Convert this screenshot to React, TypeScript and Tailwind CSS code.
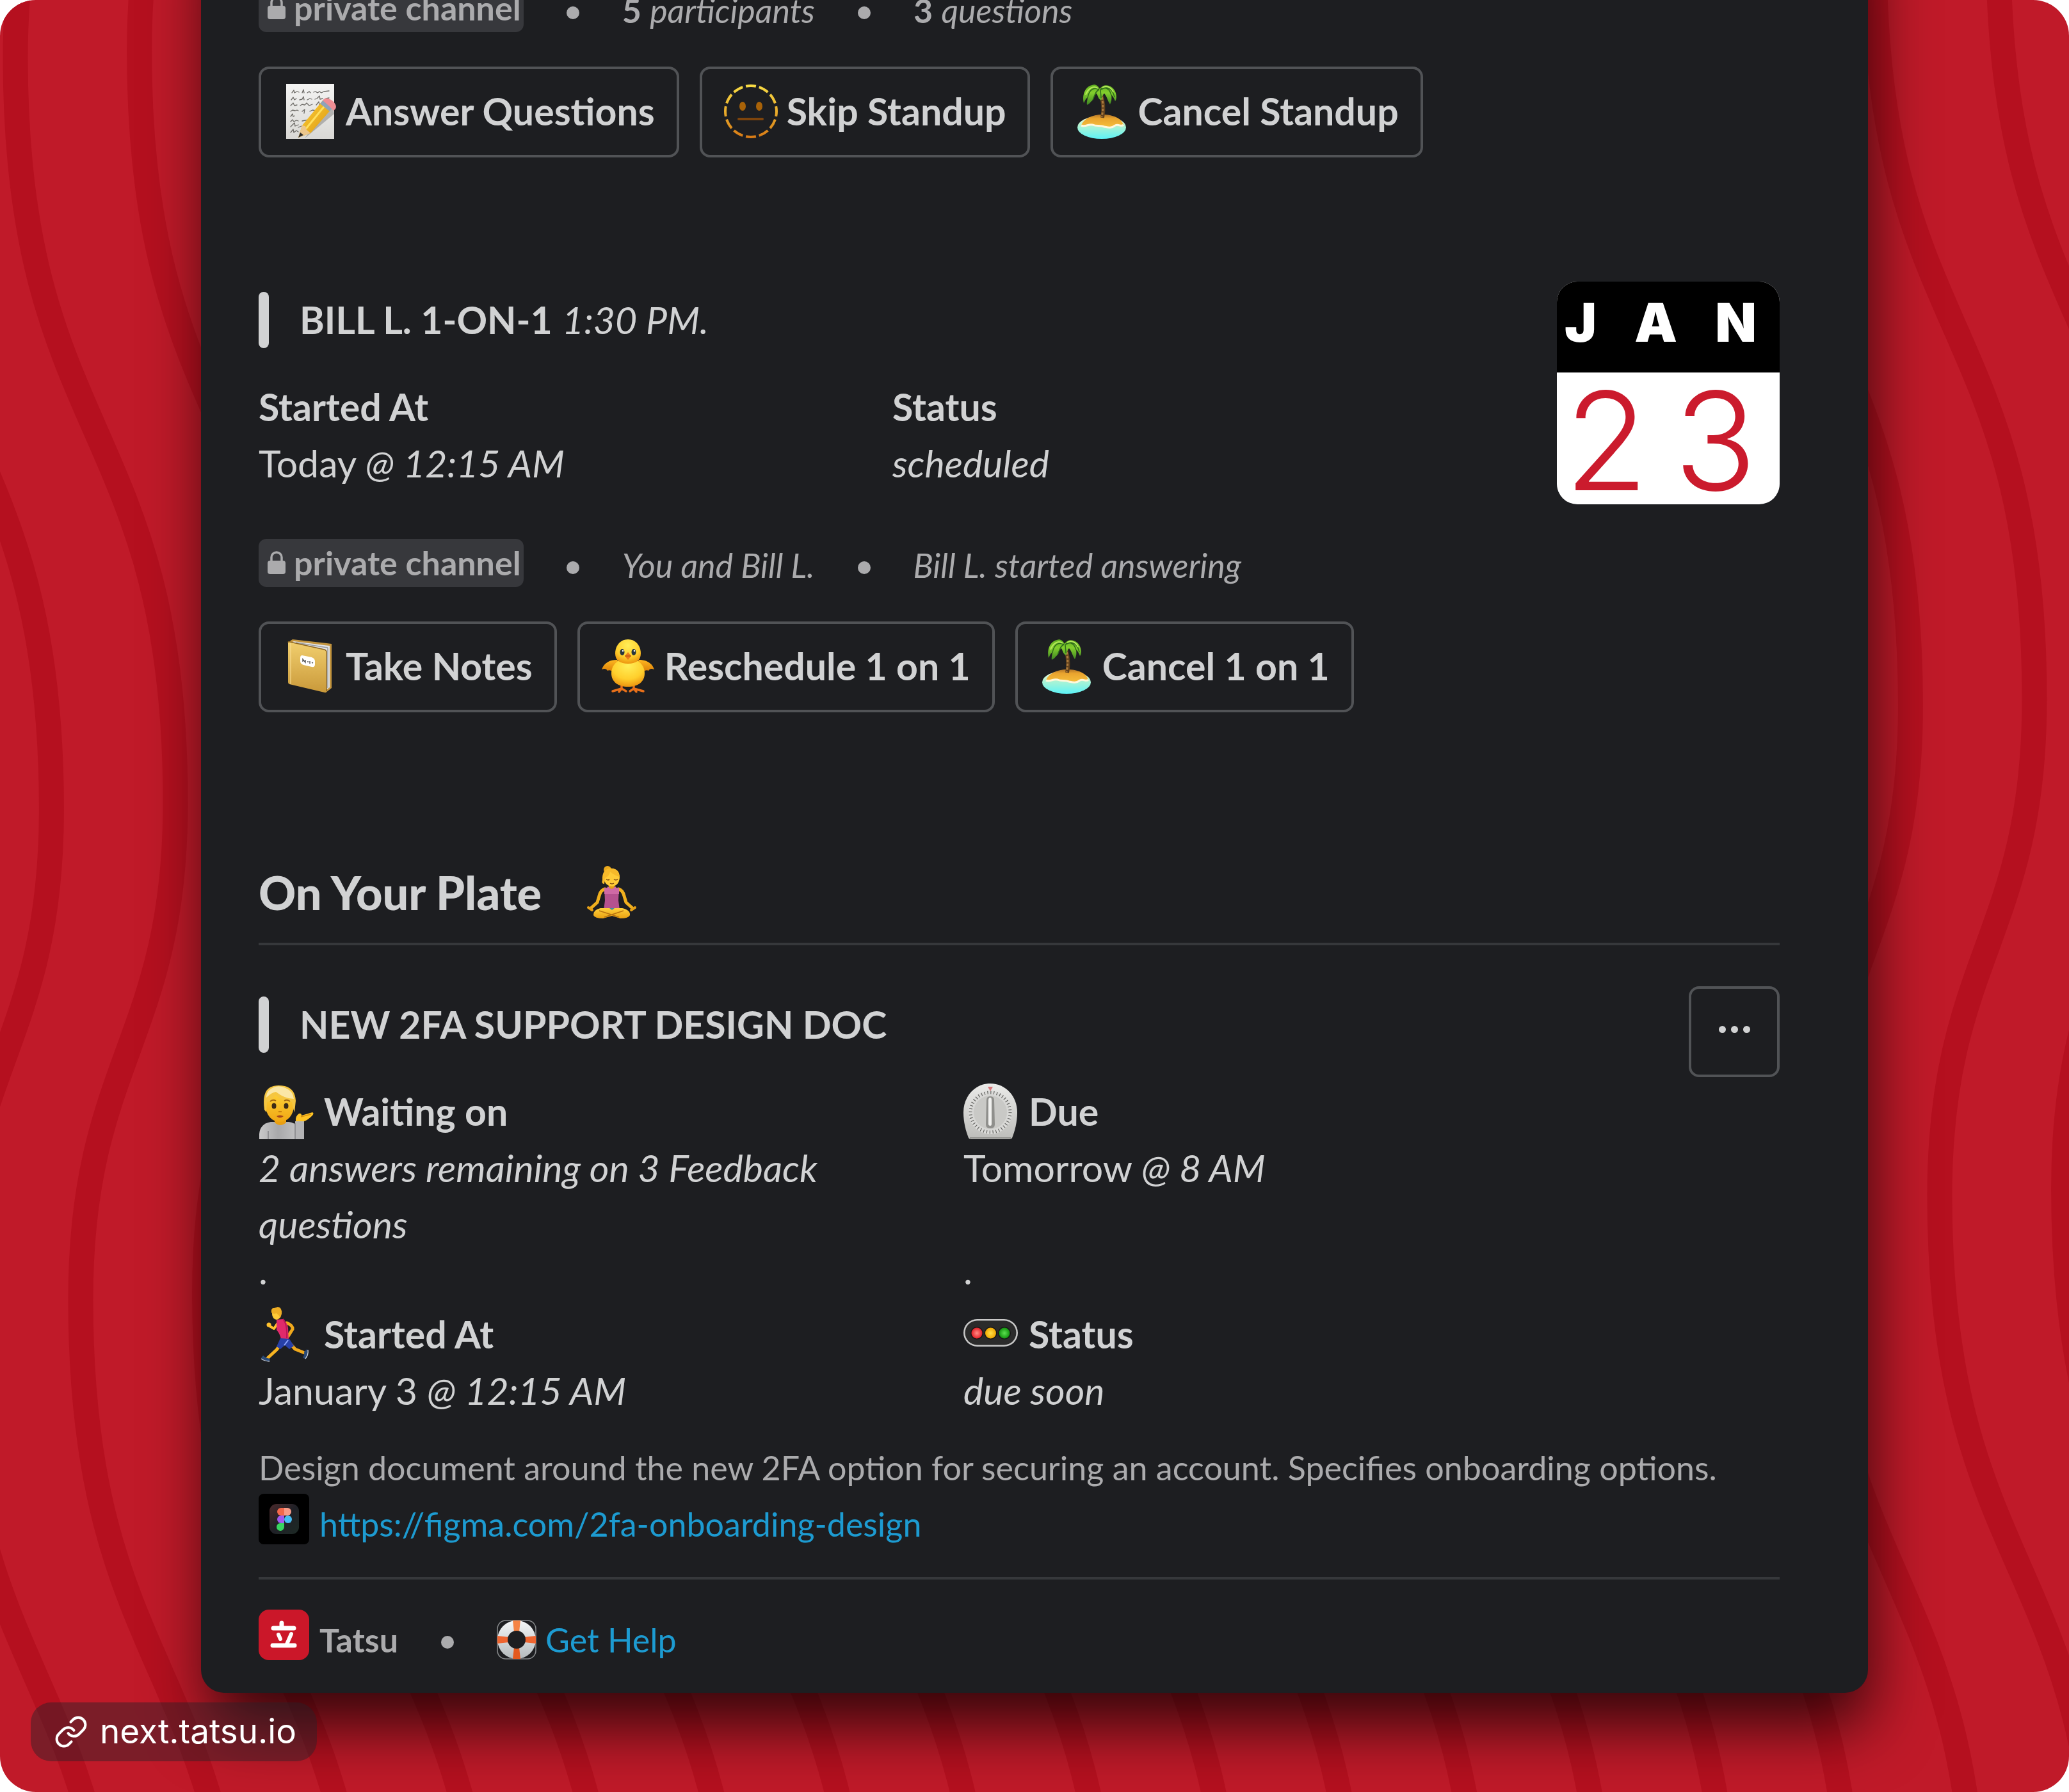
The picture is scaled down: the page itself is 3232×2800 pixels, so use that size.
import type { ReactNode } from "react";
import { Link } from "lucide-react";

const STRIPES = Array.from({ length: 20 }, (_, i) => i - 2);
const WAVE =
    "M172 -686 C172 -316 24 -280 24 90 C24 686 274 658 274 1254 C274 1624 126 1660 126 2030 C126 2626 376 2598 376 3194";

function Waves() {
    return (
        <svg
            className="absolute inset-0 -z-10 h-full w-full"
            viewBox="0 0 3232 2800"
            preserveAspectRatio="xMidYMid slice"
            fill="none"
            aria-hidden="true"
        >
            {STRIPES.map((k) => (
                <path
                    key={k}
                    d={WAVE}
                    stroke="#b5101f"
                    strokeWidth="39"
                    transform={`translate(${k * 193.6} ${k * -10.8})`}
                />
            ))}
        </svg>
    );
}

/* ---------- Emoji ---------- */

function Emoji({ children }: { children: ReactNode }) {
    return (
        <svg viewBox="0 0 84 84" className="size-[84px] shrink-0 overflow-visible" fill="none" aria-hidden="true">
            {children}
        </svg>
    );
}

function Memo() {
    return (
        <Emoji>
            <defs>
                <linearGradient id="memo-paper" x1="0" y1="0" x2="0" y2="1">
                    <stop offset="0" stopColor="#f4f4f3" />
                    <stop offset="1" stopColor="#d9d8d5" />
                </linearGradient>
                <linearGradient id="memo-pencil" x1="0" y1="0" x2="1" y2="1">
                    <stop offset="0" stopColor="#ffd23a" />
                    <stop offset="1" stopColor="#d9930c" />
                </linearGradient>
            </defs>
            <path d="M5 -1H80V85H5Z" fill="url(#memo-paper)" />
            <g stroke="#6e6c68" strokeWidth="1.3" strokeLinecap="round" strokeLinejoin="round">
                <path d="M14 13l3-4 1 4 4-2 3 1M30 13l2-5 1 5M38 13l3-2 2 2M48 12l3-1 3 2 3-2 3 2 4-2 8-1" />
                <path d="M13 24l3-4 2 4 3-2M26 24l4-1 2-4 1 5M38 24l4-2 3 1M50 23l3-1 4-4 1 5 4-1M67 22l5-1" />
                <path d="M12 33l4-4 2 4 4-1M27 33l3-2 4 1 3-3 4 4 5-2M52 32l4-5 1 5 6-1" />
                <path d="M12 42l3-2 4 1 3-1 2 1M30 42l4-3-1 6M42 42l4-2 6 1" />
                <path d="M12 50l3-4 1 4 2-1M12 58l3-3 2 3 4-2 3 1M30 57l5-1 6-1" />
                <path d="M12 66l3-3 3-3 1 5 5-2M12 75l4-5 1 5 4-3 3 2M24 67l5-2" />
            </g>
            <path d="M34 84L80 46L78 34L40 76Z" fill="#000" opacity=".22" />
            <path d="M24 83L30 64L62 25L77 37L43 76Z" fill="url(#memo-pencil)" />
            <path d="M36 69L68 30" stroke="#ffe05e" strokeWidth="3" />
            <path d="M24 83L30 64L35 65L37 71L43 76Z" fill="#ecc78d" />
            <path d="M24 83L27 75L32 79Z" fill="#2e2d2c" />
            <path d="M58 30L64 23L79 35L73 42Z" fill="#8fa3b8" />
            <path d="M62 25L65 22Q70 20 78 26Q85 33 82 38L79 41Q71 32 62 25Z" fill="#ef8d93" />
        </Emoji>
    );
}

function DottedFace() {
    return (
        <Emoji>
            <defs>
                <linearGradient id="face-ring" x1="0" y1="0" x2="0" y2="84" gradientUnits="userSpaceOnUse">
                    <stop offset="0" stopColor="#f8dc45" />
                    <stop offset=".5" stopColor="#e8ac2c" />
                    <stop offset="1" stopColor="#d87a15" />
                </linearGradient>
            </defs>
            <path
                d="M42 2A40 40 0 0 1 42 82A40 40 0 0 1 42 2Z"
                pathLength="120"
                stroke="url(#face-ring)"
                strokeWidth="4"
                strokeDasharray="7.6 2.4"
                strokeDashoffset="3.8"
            />
            <ellipse cx="29" cy="34" rx="5" ry="7" fill="#a86208" />
            <ellipse cx="55" cy="34" rx="5" ry="7" fill="#a86208" />
            <path d="M23 54H60" stroke="#7d440c" strokeWidth="4" strokeLinecap="round" />
        </Emoji>
    );
}

function Island() {
    return (
        <Emoji>
            <defs>
                <linearGradient id="isl-sea" x1="0" y1="0" x2="0" y2="1">
                    <stop offset="0" stopColor="#fdfbe0" />
                    <stop offset=".45" stopColor="#aef3d3" />
                    <stop offset="1" stopColor="#5cf3f7" />
                </linearGradient>
                <linearGradient id="isl-sand" x1="0" y1="0" x2="0" y2="1">
                    <stop offset="0" stopColor="#b27427" />
                    <stop offset=".3" stopColor="#e9a42e" />
                    <stop offset="1" stopColor="#f6bf3d" />
                </linearGradient>
                <linearGradient id="isl-leaf" x1="0" y1="0" x2="0" y2="1">
                    <stop offset="0" stopColor="#5fae21" />
                    <stop offset=".4" stopColor="#83cf2d" />
                    <stop offset="1" stopColor="#3c8422" />
                </linearGradient>
            </defs>
            <ellipse cx="42" cy="67" rx="38" ry="18" fill="url(#isl-sea)" />
            <path
                d="M10 64C13 54 27 47 43 47C60 47 73 53 76 63C73 67 68 61 63 64C57 69 51 67 46 66C39 63 34 66 28 63C21 61 17 66 10 64Z"
                fill="url(#isl-sand)"
            />
            <path d="M10 64C17 67 21 61 28 63C34 66 39 63 46 66C51 67 57 69 63 64C68 61 73 67 76 63" stroke="#fff8dc" strokeWidth="3" />
            <path d="M40 13C44 24 46 37 43 52" stroke="#60401c" strokeWidth="6" />
            <path d="M41 14C44 26 45 37 42 51" stroke="#ab7a3d" strokeWidth="3" strokeDasharray="4 2" />
            <path
                d="M39 7C45 -3 59 1 63 11C66 18 65 24 63 26C61 21 60 19 57 16C58 23 57 27 55 31C51 25 50 18 46 14C43 16 43 21 41 25C36 22 36 17 34 14C29 17 30 24 25 27C24 29 21 31 19 32C18 28 20 24 20 20C16 23 16 26 14 29C11 17 16 3 27 1C32 -1 36 2 39 7Z"
                fill="url(#isl-leaf)"
            />
            <path d="M38 8C29 3 22 9 20 21M38 8C32 10 31 18 28 24M40 7C40 12 41 17 41 21M41 7C49 3 55 8 57 17M41 8C50 2 59 6 62 20" stroke="#2f6d1b" strokeWidth="1.5" />
            <path d="M36 6C29 1 21 6 17 16M43 5C50 0 58 6 60 12" stroke="#b5e85b" strokeWidth="2" />
        </Emoji>
    );
}

function Notebook() {
    return (
        <Emoji>
            <defs>
                <linearGradient id="note-cover" x1="0" y1="0" x2="0" y2="1">
                    <stop offset="0" stopColor="#f2cf6e" />
                    <stop offset="1" stopColor="#c9993a" />
                </linearGradient>
            </defs>
            <path d="M9 4L15 0L76 7V76L67 83L60 70Z" fill="#c3953f" />
            <path d="M17 3L73 10V75L67 79V17L13 5Z" fill="#e3e4e6" />
            <path d="M70 13V76M20 5L70 13" stroke="#9b9c9e" strokeWidth="1.5" />
            <path d="M8 5Q8 3 11 4L65 16Q68 17 68 20V81Q68 84 65 83L10 70Q8 69 8 67Z" fill="url(#note-cover)" />
            <path d="M12 5V70" stroke="#fbe19a" strokeWidth="1.5" opacity=".7" />
            <path d="M8 5Q8 3 11 4L65 16Q68 17 68 20V81" stroke="#8b6420" strokeWidth="1.5" />
            <path d="M30 25L45 28Q50 30 50 34V39Q50 44 45 43L32 40Q27 38 27 34V29Q27 25 30 25Z" fill="#fff" />
            <path d="M31 35V31L35 36V32M38 35H40M42 34V38M45 36L47 37" stroke="#555" strokeWidth="1.4" />
        </Emoji>
    );
}

function Chick() {
    return (
        <Emoji>
            <defs>
                <radialGradient id="chick-body" cx=".5" cy=".25" r=".8">
                    <stop offset="0" stopColor="#ffee58" />
                    <stop offset=".6" stopColor="#ffcf2c" />
                    <stop offset="1" stopColor="#e98a0a" />
                </radialGradient>
                <linearGradient id="chick-wing" x1="0" y1="0" x2="0" y2="1">
                    <stop offset="0" stopColor="#fdb621" />
                    <stop offset="1" stopColor="#dc8108" />
                </linearGradient>
            </defs>
            <path d="M31 68V78M50 68V78M17 81L31 77L38 81M27 82L31 77M44 81L50 77L65 81M54 82L50 77" stroke="#e8701a" strokeWidth="3.5" strokeLinecap="round" />
            <path d="M24 32C13 32 4 36 0 47C5 45 7 46 9 49C12 47 15 49 17 50C22 50 26 45 28 39Z" fill="url(#chick-wing)" />
            <path d="M58 32C69 32 78 36 82 47C77 45 75 46 73 49C70 47 67 49 65 50C60 50 56 45 54 39Z" fill="url(#chick-wing)" />
            <path d="M41 30C58 30 67 41 67 53C67 66 57 74 41 74C25 74 15 66 15 53C15 41 24 30 41 30Z" fill="url(#chick-body)" />
            <path d="M41 0C54 0 61 11 61 22C61 33 53 38 41 38C29 38 21 33 21 22C21 11 28 0 41 0Z" fill="url(#chick-body)" />
            <ellipse cx="32" cy="20" rx="3.5" ry="5" fill="#28363d" />
            <ellipse cx="50" cy="20" rx="3.5" ry="5" fill="#28363d" />
            <circle cx="33" cy="18" r="1.3" fill="#fff" />
            <circle cx="51" cy="18" r="1.3" fill="#fff" />
            <path d="M41 20L46 26L41 32L36 26Z" fill="#ec7c1a" />
            <path d="M36 26H46" stroke="#b9500d" strokeWidth="1.2" />
        </Emoji>
    );
}

function Yoga() {
    return (
        <Emoji>
            <defs>
                <linearGradient id="yoga-skin" x1="0" y1="0" x2="0" y2="1">
                    <stop offset="0" stopColor="#ffd13c" />
                    <stop offset="1" stopColor="#e9a112" />
                </linearGradient>
            </defs>
            <path d="M31 37Q24 39 22 48L19 58L9 67" stroke="#f0b01e" strokeWidth="5" strokeLinecap="round" strokeLinejoin="round" />
            <path d="M52 37Q59 39 61 48L64 58L74 67" stroke="#f0b01e" strokeWidth="5" strokeLinecap="round" strokeLinejoin="round" />
            <path d="M37 28H46V38H37Z" fill="#e59f16" />
            <path d="M30 35Q34 37 36 33Q41 41 47 33Q49 37 53 35L52 55L54 70H29L31 55Z" fill="#b5528f" />
            <path d="M30 35Q34 37 36 33Q41 41 47 33Q49 37 53 35L53 45H30Z" fill="#cf6aa5" />
            <path d="M13 78Q12 70 24 67L58 67Q71 70 70 78Q68 83 55 83L42 79L28 83Q15 83 13 78Z" fill="url(#yoga-skin)" />
            <path d="M22 71L53 81M60 71L30 81" stroke="#b87310" strokeWidth="1.8" />
            <circle cx="35" cy="7" r="6" fill="#eba91c" />
            <path d="M28 17Q29 5 42 5Q54 6 54 19Q53 32 42 33Q30 32 28 17Z" fill="#ffcb37" />
            <path d="M27 23Q26 8 37 5Q51 3 54 18Q46 16 39 10Q38 17 31 20L30 29Q25 29 27 23Z" fill="#f6b92a" />
            <path d="M33 22Q36 24 38 22M45 22Q48 24 51 22M39 28Q42 30 45 28" stroke="#7c4a10" strokeWidth="1.5" />
            <path d="M5 66L11 70M78 66L72 70" stroke="#e6a017" strokeWidth="4" strokeLinecap="round" />
            <path d="M38 67H46L42 70Z" fill="#418f9c" />
        </Emoji>
    );
}

function TippingHand() {
    return (
        <Emoji>
            <defs>
                <linearGradient id="tip-skin" x1="0" y1="0" x2="0" y2="1">
                    <stop offset="0" stopColor="#ffd43c" />
                    <stop offset="1" stopColor="#f0a713" />
                </linearGradient>
                <linearGradient id="tip-shirt" x1="0" y1="0" x2="1" y2="0">
                    <stop offset="0" stopColor="#c9c9ca" />
                    <stop offset=".5" stopColor="#a8a8aa" />
                    <stop offset="1" stopColor="#c2c2c3" />
                </linearGradient>
            </defs>
            <path d="M1 85V77Q2 61 19 58H47Q56 59 60 65V85Z" fill="url(#tip-shirt)" />
            <path d="M57 57H71V85H57Z" fill="#b4b4b6" />
            <path d="M57 60V85M15 72V85" stroke="#838386" strokeWidth="1.5" />
            <path d="M25 50H43V59Q34 67 25 59Z" fill="#e99f12" />
            <ellipse cx="33" cy="33" rx="22" ry="25" fill="url(#tip-skin)" />
            <path d="M9 39Q5 11 18 4Q27 -1 41 2Q57 6 58 25L56 43Q53 35 52 27Q38 27 26 16Q20 26 13 27L12 43Z" fill="#f5c641" />
            <path d="M16 9Q28 -2 42 5Q54 10 55 22Q41 22 27 11Q20 12 12 20Q12 13 16 9Z" fill="#fbe7a6" />
            <ellipse cx="24" cy="33" rx="3.5" ry="4.5" fill="#3c2a16" />
            <ellipse cx="43" cy="33" rx="3.5" ry="4.5" fill="#3c2a16" />
            <path d="M18 26Q22 22 27 25M40 25Q45 22 49 26" stroke="#a76b12" strokeWidth="1.8" />
            <path d="M28 49Q33 46 39 49Q33 54 28 49Z" fill="#a6471b" />
            <path d="M31 42H36" stroke="#c57c0d" strokeWidth="1.8" />
            <path d="M58 57Q57 49 63 45Q67 44 67 48L84 43Q87 44 84 48Q77 55 71 57Z" fill="#ffc425" />
            <path d="M66 50L82 46" stroke="#d89110" strokeWidth="1.5" />
        </Emoji>
    );
}

function Runner() {
    return (
        <Emoji>
            <path d="M35 57L28 66L14 79" stroke="#f7b421" strokeWidth="5" strokeLinecap="round" strokeLinejoin="round" />
            <path d="M48 55L57 65L72 71" stroke="#f0a91c" strokeWidth="5" strokeLinecap="round" strokeLinejoin="round" />
            <path d="M44 24Q54 28 53 34L46 45" stroke="#f0a91c" strokeWidth="5" strokeLinecap="round" strokeLinejoin="round" />
            <path d="M30 24L24 33L17 29" stroke="#ffc12d" strokeWidth="4" strokeLinecap="round" strokeLinejoin="round" />
            <circle cx="16" cy="27" r="3.5" fill="#ffc12d" />
            <path d="M28 19L38 18Q45 24 46 32L47 51L35 50Q34 42 28 35Z" fill="#e02a6b" />
            <path d="M38 18Q45 25 44 48" stroke="#b81555" strokeWidth="2" />
            <path d="M34 48L48 49L55 60L48 65L41 59L34 65L28 61Z" fill="#2740a7" />
            <path d="M46 51L40 59" stroke="#8ba4ff" strokeWidth="2" />
            <ellipse cx="28" cy="10" rx="7" ry="9" fill="#ffcb37" />
            <path d="M20 8Q19 0 24 1L30 -1Q37 0 36 10L34 16Q31 11 28 9Q23 11 20 8Z" fill="#eeae25" />
            <path d="M7 75Q11 79 18 80L17 84Q8 82 4 79Z" fill="#294a78" />
            <path d="M71 69L76 65Q77 73 72 80L69 78Q72 74 71 69Z" fill="#294a78" />
            <path d="M4 80Q10 84 17 84M77 66Q78 74 73 80" stroke="#cbd6e5" strokeWidth="1.4" />
        </Emoji>
    );
}

function Timer() {
    return (
        <Emoji>
            <defs>
                <linearGradient id="timer-body" x1="0" y1="0" x2="0" y2="1">
                    <stop offset="0" stopColor="#ebebe9" />
                    <stop offset="1" stopColor="#bdbdba" />
                </linearGradient>
                <radialGradient id="timer-dial">
                    <stop offset="0" stopColor="#bdbdba" />
                    <stop offset="1" stopColor="#dededc" />
                </radialGradient>
            </defs>
            <path d="M42 -2C66 -2 84 18 84 43C84 59 80 73 76 83Q75 85 72 85H12Q9 85 8 83C4 73 0 59 0 43C0 18 18 -2 42 -2Z" fill="url(#timer-body)" />
            <path d="M10 83H74" stroke="#8f8f8c" strokeWidth="2" />
            <circle cx="42" cy="43" r="34" fill="url(#timer-dial)" />
            <circle cx="42" cy="43" r="31" stroke="#62625f" strokeWidth="5" strokeDasharray="1.2 3.67" />
            <circle cx="42" cy="43" r="26" fill="#c9c9c6" />
            <path d="M36 24Q36 18 42 18Q48 18 48 24L49 62Q49 68 42 68Q35 68 35 62Z" fill="#8f8f8c" />
            <path d="M39 24Q39 20 42 20Q44 20 44 24V61Q44 64 42 64Q39 64 39 61Z" fill="#f1f1ef" />
            <path d="M38 3H46L42 10Z" fill="#d9777b" />
        </Emoji>
    );
}

function TrafficLight() {
    return (
        <Emoji>
            <defs>
                <radialGradient id="light-red">
                    <stop offset="0" stopColor="#ff8d86" />
                    <stop offset="1" stopColor="#e32027" />
                </radialGradient>
                <radialGradient id="light-amber">
                    <stop offset="0" stopColor="#ffe04a" />
                    <stop offset="1" stopColor="#f0a800" />
                </radialGradient>
                <radialGradient id="light-green">
                    <stop offset="0" stopColor="#5ce050" />
                    <stop offset="1" stopColor="#12930f" />
                </radialGradient>
            </defs>
            <rect x="0" y="18" width="85" height="43" rx="21.5" fill="#c9c9c9" />
            <rect x="2.5" y="20.5" width="80" height="38" rx="19" fill="#2b2b2b" />
            <circle cx="21" cy="40" r="10" fill="#161616" />
            <circle cx="42.5" cy="40" r="10" fill="#161616" />
            <circle cx="64" cy="40" r="10" fill="#161616" />
            <circle cx="21" cy="40" r="8.5" fill="url(#light-red)" />
            <circle cx="42.5" cy="40" r="8.5" fill="url(#light-amber)" />
            <circle cx="64" cy="40" r="8.5" fill="url(#light-green)" />
        </Emoji>
    );
}

function LifeRing() {
    return (
        <svg viewBox="0 0 62 62" className="size-[62px] shrink-0 overflow-visible" fill="none" aria-hidden="true">
            <defs>
                <linearGradient id="ring-white" x1="0" y1="0" x2="0" y2="1">
                    <stop offset="0" stopColor="#f5f7f8" />
                    <stop offset="1" stopColor="#b4babd" />
                </linearGradient>
            </defs>
            <rect x="1" y="1" width="60" height="60" rx="13" stroke="#85888a" strokeWidth="1.6" />
            <circle cx="31" cy="31" r="30" fill="url(#ring-white)" />
            <path d="M25 1H37L35 19H27Z" fill="#f58345" />
            <path d="M27 43H35L37 61H25Z" fill="#e3591f" />
            <path d="M1 25L19 27V35L1 37Z" fill="#ee6530" />
            <path d="M61 25L43 27V35L61 37Z" fill="#ee6530" />
            <circle cx="31" cy="31" r="14" fill="#1d1e21" />
        </svg>
    );
}

function FigmaIcon() {
    return (
        <svg viewBox="0 0 79 79" className="size-[79px] shrink-0" aria-hidden="true">
            <defs>
                <linearGradient id="figma-tile" x1="0" y1="0" x2="1" y2="1">
                    <stop offset="0" stopColor="#4a2a2c" />
                    <stop offset=".5" stopColor="#1f2026" />
                    <stop offset="1" stopColor="#1d2a25" />
                </linearGradient>
            </defs>
            <rect width="79" height="79" rx="8" fill="#000" />
            <rect x="17" y="16" width="46" height="47" rx="11" fill="url(#figma-tile)" />
            <path d="M40 22H35A6 6 0 0 0 35 34H40Z" fill="#f4694c" />
            <path d="M40 22H45A6 6 0 0 1 45 34H40Z" fill="#f99b88" />
            <path d="M40 34H35A6 6 0 0 0 35 46H40Z" fill="#a259ef" />
            <circle cx="46" cy="40" r="6" fill="#47bdf5" />
            <path d="M40 46H35A6 6 0 1 0 40 52Z" fill="#38d45f" />
        </svg>
    );
}

function TatsuIcon() {
    return (
        <svg viewBox="0 0 79 79" className="size-[79px] shrink-0" fill="none" aria-hidden="true">
            <rect width="79" height="79" rx="16" fill="#cb1729" />
            <path d="M36 21V28M23 29H55" stroke="#fff" strokeWidth="7" strokeLinecap="round" />
            <path d="M31 39L34 46M51 38L44 54" stroke="#fff" strokeWidth="6" strokeLinecap="round" />
            <path d="M22 56H56" stroke="#fff" strokeWidth="7" strokeLinecap="round" />
        </svg>
    );
}

function LockIcon() {
    return (
        <svg viewBox="0 0 28 36" className="h-[36px] w-[28px] shrink-0" fill="none" aria-hidden="true">
            <path d="M6 16V10A8 8 0 0 1 22 10V16" stroke="#ababad" strokeWidth="3.5" />
            <rect y="15" width="28" height="21" rx="4" fill="#ababad" />
        </svg>
    );
}

/* ---------- Blocks ---------- */

function Dot() {
    return <span className="mt-2 size-5 shrink-0 rounded-full bg-[#ababad]" />;
}

function ContextRow({ children }: { children: ReactNode }) {
    return (
        <div className="flex items-center gap-[67px] text-[52px] leading-[88px] text-[#ababad]">
            <span className="mb-2 flex h-[75px] items-center gap-[13px] rounded-xl bg-[#37383c] pr-1 pl-[14px] leading-[75px] font-bold">
                <LockIcon />
                private channel
            </span>
            {children}
        </div>
    );
}

function ActionButton({ icon, label }: { icon: ReactNode; label: string }) {
    return (
        <button
            type="button"
            className="flex h-[142px] items-center gap-[14px] rounded-2xl border-4 border-[#515356] px-[34px] pb-[3px] font-bold whitespace-nowrap"
        >
            {icon}
            {label}
        </button>
    );
}

function Quote({ children }: { children: ReactNode }) {
    return (
        <div className="flex gap-12">
            <span className="w-4 shrink-0 rounded-lg bg-[#d1d2d3]" />
            <h3>{children}</h3>
        </div>
    );
}

function Field({ icon, label, children }: { icon?: ReactNode; label: string; children: ReactNode }) {
    return (
        <div>
            <div className="flex items-center gap-[18px] font-bold">
                {icon}
                {label}
            </div>
            <p>{children}</p>
        </div>
    );
}

export default function App() {
    return (
        <main className="relative isolate flex min-h-screen flex-col overflow-hidden rounded-[56px] bg-[#c01a29] font-[Lato,sans-serif]">
            <Waves />

            <div className="mx-[314px] -mt-[160px] rounded-[36px] bg-[#1d1e21] pt-[132px] pr-[138px] pb-[39px] pl-[90px] text-[59px] leading-[88px] text-[#d1d2d3] shadow-[8px_58px_100px_-8px_rgba(0,0,0,0.75)]">
                {/* Standup */}
                <ContextRow>
                    <Dot />
                    <span>
                        <b>5</b> <i>participants</i>
                    </span>
                    <Dot />
                    <span>
                        <b>3</b> <i>questions</i>
                    </span>
                </ContextRow>
                <div className="mt-11 flex gap-8">
                    <ActionButton icon={<Memo />} label="Answer Questions" />
                    <ActionButton icon={<DottedFace />} label="Skip Standup" />
                    <ActionButton icon={<Island />} label="Cancel Standup" />
                </div>

                {/* 1 on 1 */}
                <section className="mt-[194px] flex items-start gap-20">
                    <div className="flex-1 pt-4">
                        <Quote>
                            <b>BILL L. 1-ON-1</b> <i>1:30 PM.</i>
                        </Quote>
                        <div className="mt-12 grid grid-cols-2 gap-x-8">
                            <Field label="Started At">
                                Today <i>@ 12:15 AM</i>
                            </Field>
                            <Field label="Status">
                                <i>scheduled</i>
                            </Field>
                        </div>
                    </div>
                    <div className="w-[348px] shrink-0 overflow-hidden rounded-[32px] bg-white font-[Inter,sans-serif]">
                        <div className="flex h-[142px] justify-between bg-black pt-[22px] pr-9 pl-3 text-[84px] leading-[84px] font-black text-white">
                            <span>J</span>
                            <span>A</span>
                            <span>N</span>
                        </div>
                        <div className="flex h-[206px] items-start justify-between pt-1 pr-9 pl-3 text-[213px] leading-[206px] font-light text-[#cb1b2d]">
                            <span>2</span>
                            <span>3</span>
                        </div>
                    </div>
                </section>

                <div className="mt-[51px]">
                    <ContextRow>
                        <Dot />
                        <i>You and Bill L.</i>
                        <Dot />
                        <i>Bill L. started answering</i>
                    </ContextRow>
                </div>
                <div className="mt-11 flex gap-8">
                    <ActionButton icon={<Notebook />} label="Take Notes" />
                    <ActionButton icon={<Chick />} label="Reschedule 1 on 1" />
                    <ActionButton icon={<Island />} label="Cancel 1 on 1" />
                </div>

                {/* On your plate */}
                <div className="mt-[237px] flex items-center gap-[68px] border-b-4 border-[#36383b] pb-[35px]">
                    <h2 className="text-[72px] leading-[88px] font-black">On Your Plate</h2>
                    <Yoga />
                </div>

                <section className="mt-16 flex items-start gap-16">
                    <div className="flex-1 pt-4">
                        <Quote>
                            <b>NEW 2FA SUPPORT DESIGN DOC</b>
                        </Quote>
                        <div className="mt-12 grid grid-cols-2 gap-x-8">
                            <Field icon={<TippingHand />} label="Waiting on">
                                <i>2 answers remaining on 3 Feedback questions</i>
                            </Field>
                            <Field icon={<Timer />} label="Due">
                                Tomorrow <i>@ 8 AM</i>
                            </Field>
                            <p className="h-[84px] leading-[56px]">.</p>
                            <p className="h-[84px] leading-[56px]">.</p>
                            <Field icon={<Runner />} label="Started At">
                                January 3 <i>@ 12:15 AM</i>
                            </Field>
                            <Field icon={<TrafficLight />} label="Status">
                                <i>due soon</i>
                            </Field>
                        </div>
                    </div>
                    <button
                        type="button"
                        aria-label="More actions"
                        className="flex size-[142px] shrink-0 items-center justify-center gap-2 rounded-2xl border-4 border-[#515356] pb-2"
                    >
                        <span className="size-[11px] rounded-full bg-[#d1d2d3]" />
                        <span className="size-[11px] rounded-full bg-[#d1d2d3]" />
                        <span className="size-[11px] rounded-full bg-[#d1d2d3]" />
                    </button>
                </section>

                <div className="mt-8 border-b-4 border-[#36383b] pb-[39px] text-[52px] text-[#ababad]">
                    <p>Design document around the new 2FA option for securing an account. Specifies onboarding options.</p>
                    <div className="flex h-[88px] items-center gap-4">
                        <span className="mb-4">
                            <FigmaIcon />
                        </span>
                        <a href="https://figma.com/2fa-onboarding-design" className="text-[#1d9bd1]">
                            https://figma.com/2fa-onboarding-design
                        </a>
                    </div>
                </div>

                <footer className="mt-[50px] flex h-[88px] items-center gap-[67px] text-[52px] text-[#ababad]">
                    <span className="flex items-center gap-4 font-bold">
                        <span className="mb-4">
                            <TatsuIcon />
                        </span>
                        Tatsu
                    </span>
                    <Dot />
                    <a href="#help" className="flex items-center gap-[14px] text-[#1d9bd1]">
                        <LifeRing />
                        Get Help
                    </a>
                </footer>
            </div>

            <a
                href="https://next.tatsu.io"
                className="mt-[15px] ml-12 flex h-[92px] items-center gap-[18px] self-start rounded-[32px] bg-[rgba(40,34,40,0.45)] pr-8 pl-9 font-[Inter,sans-serif] text-[53px] text-white"
            >
                <Link size={54} strokeWidth={1.8} />
                next.tatsu.io
            </a>
        </main>
    );
}
